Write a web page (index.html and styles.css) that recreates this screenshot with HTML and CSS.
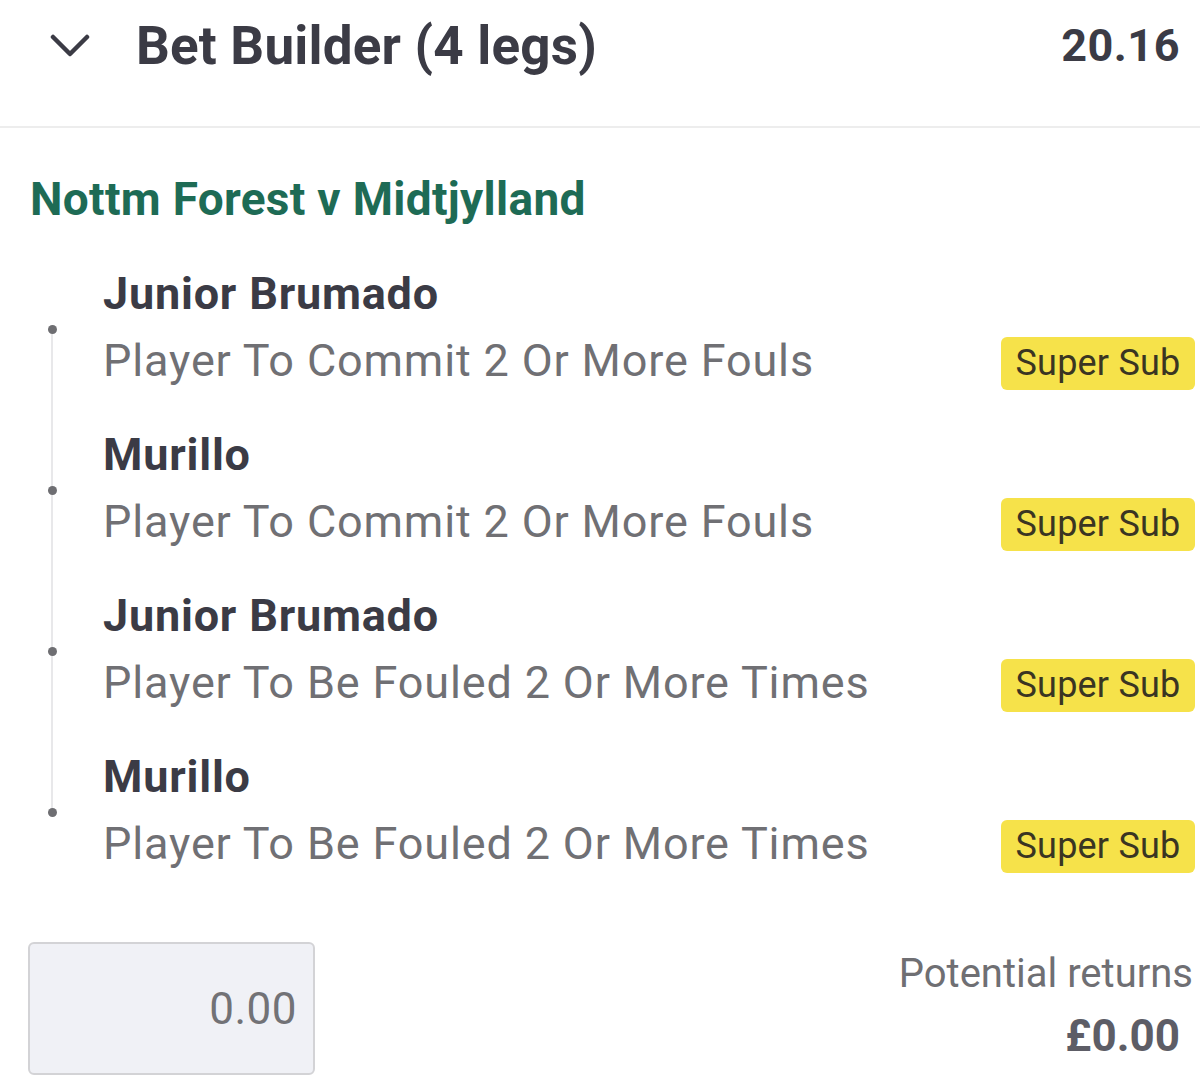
FILE: index.html
```html
<!DOCTYPE html>
<html lang="en">
<head>
<meta charset="utf-8">
<title>Bet Builder</title>
<link rel="stylesheet" href="styles.css">
</head>
<body>
<div class="slip">
  <header class="head">
    <svg class="chev" width="40" height="24" viewBox="0 0 40 24" aria-hidden="true">
      <path d="M3 3 L20 20 L37 3" fill="none" stroke="#3b3b45" stroke-width="4.5" stroke-linecap="round" stroke-linejoin="round"/>
    </svg>
    <h1 class="title">Bet Builder (4 legs)</h1>
    <span class="odds">20.16</span>
  </header>

  <h2 class="match">Nottm Forest v Midtjylland</h2>

  <div class="legs">
    <div class="leg">
      <div class="name">Junior Brumado</div>
      <div class="desc-row"><span class="desc">Player To Commit 2 Or More Fouls</span><span class="badge">Super Sub</span></div>
    </div>
    <div class="leg">
      <div class="name">Murillo</div>
      <div class="desc-row"><span class="desc">Player To Commit 2 Or More Fouls</span><span class="badge">Super Sub</span></div>
    </div>
    <div class="leg">
      <div class="name">Junior Brumado</div>
      <div class="desc-row"><span class="desc">Player To Be Fouled 2 Or More Times</span><span class="badge">Super Sub</span></div>
    </div>
    <div class="leg">
      <div class="name">Murillo</div>
      <div class="desc-row"><span class="desc">Player To Be Fouled 2 Or More Times</span><span class="badge">Super Sub</span></div>
    </div>
  </div>

  <div class="foot">
    <div class="stake">0.00</div>
    <div class="returns">
      <div class="ret-label">Potential returns</div>
      <div class="ret-value">£0.00</div>
    </div>
  </div>
</div>
</body>
</html>
```

FILE: styles.css
```css
* { box-sizing: border-box; }
html, body { margin: 0; padding: 0; background: #ffffff; }
body {
  font-family: Roboto, "Liberation Sans", Arial, sans-serif;
  color: #3b3b45;
  width: 1200px;
  height: 1089px;
  overflow: hidden;
}
.slip { display: flex; flex-direction: column; }

.head {
  display: flex;
  align-items: center;
  height: 128px;
  padding: 0 20px 34px 50px;
  border-bottom: 2px solid #ededed;
}
.chev { flex: none; display: block; }
.title {
  margin: 0 0 0 46px;
  font-size: 53px;
  font-weight: 700;
  line-height: 60px;
  letter-spacing: 0.2px;
  color: #3b3b45;
  flex: 1;
}
.odds {
  font-size: 45px;
  font-weight: 700;
  line-height: 60px;
  letter-spacing: 0.5px;
  color: #3b3b45;
}

.match {
  margin: 43px 0 0 30px;
  font-size: 46px;
  font-weight: 700;
  line-height: 56px;
  letter-spacing: 0.3px;
  color: #1e6b55;
}

.legs {
  position: relative;
  margin-top: 37px;
  padding-left: 103px;
  padding-right: 5px;
  display: flex;
  flex-direction: column;
  gap: 34px;
}
.legs::before {
  content: "";
  position: absolute;
  left: 51px;
  top: 65px;
  bottom: 62px;
  width: 2px;
  background: #e8e8ea;
}
.leg { position: relative; display: flex; flex-direction: column; gap: 7px; }
.leg::before {
  content: "";
  position: absolute;
  left: -55px;
  top: 61px;
  width: 9px;
  height: 9px;
  border-radius: 50%;
  background: #6e6e72;
}
.name {
  font-size: 45px;
  font-weight: 700;
  line-height: 60px;
  letter-spacing: 0.8px;
  color: #3b3b45;
}
.desc-row {
  display: flex;
  align-items: center;
  justify-content: space-between;
  height: 60px;
}
.desc {
  font-size: 45px;
  font-weight: 400;
  line-height: 60px;
  letter-spacing: 0.85px;
  color: #707074;
}
.badge {
  display: flex;
  align-items: center;
  justify-content: center;
  width: 194px;
  height: 53px;
  margin-top: 4px;
  border-radius: 6px;
  background: #f6e24a;
  color: #3a3522;
  font-size: 36px;
  font-weight: 400;
  letter-spacing: 0.2px;
}

.foot {
  display: flex;
  justify-content: space-between;
  align-items: flex-start;
  margin-top: 68px;
  padding: 0 7px 0 28px;
}
.stake {
  width: 287px;
  height: 133px;
  border: 2px solid #d3d3d6;
  border-radius: 6px;
  background: #f0f1f6;
  display: flex;
  align-items: center;
  justify-content: flex-end;
  padding-right: 16px;
  font-size: 44px;
  letter-spacing: 0.5px;
  color: #727276;
}
.returns {
  display: flex;
  flex-direction: column;
  align-items: flex-end;
  margin-top: 8px;
}
.ret-label {
  font-size: 40px;
  line-height: 48px;
  color: #6f6f73;
}
.ret-value {
  margin-top: 12px;
  margin-right: 13px;
  font-size: 44px;
  font-weight: 700;
  line-height: 52px;
  color: #5d5d66;
}
```
